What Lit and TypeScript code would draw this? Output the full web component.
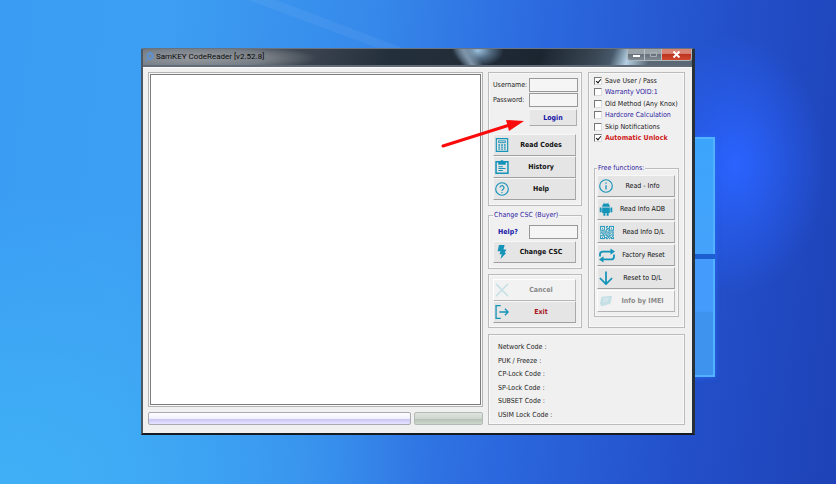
import { LitElement, html, svg, css } from "lit";
import { customElement, property } from "lit/decorators.js";

const qrRows = [
  "11111011011111",
  "10001010010001",
  "10101001110101",
  "10001011010001",
  "11111010111111",
  "00100110010010",
  "11011101101101",
  "01100110110011",
  "10111001011010",
  "00010110100101",
  "11111011011011",
  "10001001110010",
  "10101110101101",
  "11111011010111",
];

const icons: Record<string, unknown> = {
  calculator: svg`<path d="M1.500 .7h13v14.600h-13z" stroke-width="1.300"/><path d="M4 3.300h8v2H4z" stroke-width="1"/><path d="M3.800 8h2M7 8h2M10.200 8h2M3.800 10.400h2M7 10.400h2M10.200 10.400h2M3.800 12.800h2M7 12.800h2M10.200 12.800h2" stroke-width="1.500"/>`,
  clipboard: svg`<path d="M1.200 2h13.600v13.200H1.200z" stroke-width="1.700"/><path d="M4 5V2.400h2.300a1.700 2 0 0 1 3.400 0H12V5z" fill="currentColor" stroke-width=".6"/><path d="M4 7.700h5M4 9.800h8M4 12h5" stroke-width="1.200"/>`,
  help: svg`<circle cx="8" cy="8" r="7.200" stroke-width="1.300"/><path d="M5.700 6.400a2.300 2.300 0 1 1 3.500 2C8.400 8.900 8 9.200 8 10.200M8 11.400v1.200" stroke-width="1.300"/>`,
  bolt: svg`<path d="M4.500 0h6.500L9.700 5h3.300L11 9h1.800L6.400 16l1.200-5.400H5.200L6.300 7H3z" fill="currentColor" stroke="none"/>`,
  cross: svg`<path d="M1 .8l14 14.400M15 .8L1 15.200" stroke-width="1.800"/>`,
  exit: svg`<path d="M6.500 .8H1.200v14.400h5.300M5 8h10M11.300 4.200L15 8l-3.700 3.800" stroke-width="1.500"/>`,
  info: svg`<circle cx="8" cy="8" r="7.200" stroke-width="1.300"/><path d="M8 7v5M8 4v1.500" stroke-width="1.500"/>`,
  android: svg`<path d="M3.600 5.500a4.400 3.800 0 0 1 8.800 0zM3.600 6.200h8.800v6.300H3.600zM.8 6.300h2.200v5.500H.8zM13 6.300h2.200v5.500H13zM5 12h2.300v3.700H5zM8.700 12H11v3.700H8.700z" fill="currentColor" stroke="none"/><path d="M5.300 .8l1 2M10.700 .8l-1 2" stroke-width=".8"/>`,
  qr: svg`${qrRows.map((row, y) => [...row].map((c, x) => (c === "1" ? svg`<rect x=${x + 1} y=${y + 1} width="1" height="1" fill="currentColor" stroke="none"/>` : null)))}`,
  cycle: svg`<path d="M1 9V6.800a3 3 0 0 1 3-3h9M15 7v2.200a3 3 0 0 1-3 3H3" stroke-width="1.800"/><path d="M11.500 .5l4.500 3.300-4.500 3.300zM4.500 8.900L0 12.200l4.500 3.300z" fill="currentColor" stroke="none"/>`,
  down: svg`<path d="M8 .5v14.200M1 8l7 7 7-7" stroke-width="2"/>`,
  note: svg`<path d="M3 3l12-1-2 9-10 3-2-3z" fill="currentColor" stroke="none"/><path d="M5 6l6-1M5 8.500l5-1" stroke="#f3f4f4" stroke-width=".8"/>`,
  gear: svg`<circle cx="9" cy="6.500" r="4.500" stroke-width="3"/><path d="M9 0v3M9 10v3M2.500 6.500h3M12.500 6.500h3M4.500 11L1 15" stroke-width="2"/>`,
};

@customElement("tool-icon")
class ToolIcon extends LitElement {
  @property() name = "";
  static styles = css`
    :host { display: block; width: 16px; height: 16px; flex: none; }
    .glyph { display: block; width: 100%; height: 100%; fill: none; stroke: currentColor; }
  `;
  render() {
    return html`<svg class="glyph" viewBox="0 0 16 16" preserveAspectRatio="none" aria-hidden="true">${icons[this.name]}</svg>`;
  }
}

@customElement("tool-button")
class ToolButton extends LitElement {
  @property() icon = "";
  @property() label = "";
  @property() tone = "";
  @property({ type: Boolean }) disabled = false;
  static styles = css`
    :host { display: block; }
    .tool {
      display: flex; align-items: center; box-sizing: border-box; width: 100%; height: 22px;
      padding: 0 2px 0 1px; border: 1px solid; border-color: #f8f8f8 #a9a9a9 #a0a0a0 #f4f4f4;
      background: #e5e5e5; color: #111; font: bold 7px/10px "DejaVu Sans Condensed", sans-serif;
    }
    .caption { flex: 1; text-align: center; white-space: nowrap; }
    .pic { color: #1494b8; width: 14px; height: 14px; }
    .pic.cycle, .pic.qr { width: 16px; height: 15px; }
    .tool.plain { font-weight: normal; }
    .tool.danger { color: #a8161c; }
    .tool:disabled { background: #f2f2f2; color: #8a8a8a; border-color: #fff #bbb #b4b4b4 #fff; }
    .tool:disabled .pic { color: #c4e0e6; }
  `;
  render() {
    return html`<button class="tool ${this.tone}" ?disabled=${this.disabled}>
      <tool-icon class="pic ${this.icon}" name=${this.icon}></tool-icon><span class="caption">${this.label}</span>
    </button>`;
  }
}

const options = [
  { label: "Save User / Pass", checked: true, tone: "" },
  { label: "Warranty VOID:1", checked: false, tone: "blue" },
  { label: "Old Method (Any Knox)", checked: false, tone: "" },
  { label: "Hardcore Calculation", checked: false, tone: "blue" },
  { label: "Skip Notifications", checked: false, tone: "" },
  { label: "Automatic Unlock", checked: true, tone: "red" },
];

const freeTools = [
  { icon: "info", label: "Read - Info" },
  { icon: "android", label: "Read Info ADB" },
  { icon: "qr", label: "Read Info D/L" },
  { icon: "cycle", label: "Factory Reset" },
  { icon: "down", label: "Reset to D/L" },
];

const codes = ["Network Code :", "PUK / Freeze :", "CP-Lock Code :", "SP-Lock Code :", "SUBSET Code :", "USIM Lock Code :"];

@customElement("app-root")
class AppRoot extends LitElement {
  static styles = css`
    :host {
      display: flex; box-sizing: border-box; min-height: 100vh; position: relative; overflow: hidden;
      padding: 48px 141px 49px;
      font: 7px/10px "DejaVu Sans Condensed", sans-serif; color: #222;
      background:
        radial-gradient(ellipse 90px 130px at 88% 34%, #2a63ff 0%, #2a63ff88 45%, #2a63ff00 100%),
        linear-gradient(97deg, #3a9df3 0%, #3d9ff3 18%, #3689ea 42%, #2c6ae0 60%, #2350ca 82%, #1e42b7 100%);
    }
    .wallpaper { position: absolute; inset: 0; background: radial-gradient(ellipse 50% 60% at 0% 100%, #40b0f6 0%, #40b0f600 100%); }
    .beam { position: absolute; left: 248px; top: 0; width: 170px; height: 50px; }
    .logo { position: absolute; right: 121px; top: 137px; width: 40px; height: 240px; display: grid; grid-template-rows: 117px 118px; gap: 5px; background: #1d5fd0; box-shadow: 0 0 5px #2a6cf0; }
    .pane { background: linear-gradient(#3ba5fb, #45a2fb); border: solid #53b2ff; border-width: 2px 2px 0 0; }
    .pane.low { background: linear-gradient(#449bfb 45%, #3d93ee 46%); border-width: 0 2px 2px 0; }
    .window {
      position: relative; flex: 1; min-width: 0; display: flex; flex-direction: column;
      border: solid; border-width: 1px 3px 2px 2px; border-color: #68737f #283038 #151b20 #4c5863; background: #f0f0f0;
      border-radius: 2px 2px 0 0;
    }
    .titlebar {
      display: flex; align-items: center; height: 16px; gap: 2px; padding-left: 2px; border-bottom: 2px solid #626b78;
      background:
        radial-gradient(ellipse 120px 15px at 54px 9px, #a2a6abdd 0%, #8a8f95bb 60%, #8a8f9500 100%),
        linear-gradient(60deg, #fff0 57%, #8096aa 59%, #8096aa00 61%),
        radial-gradient(ellipse 26px 16px at 61% 10%, #9cc0de 0%, #6a8aa6aa 50%, #54708a00 100%),
        linear-gradient(110deg, #515a65 0%, #3b444f 30%, #242f3c 45%, #222c38 60%, #1b2530 72%, #3a4754 82%, #46586a 85%, #b5d0e4 88%, #5a6875 92%);
    }
    .title { flex: 1; margin: 0; font: normal 8px/12px Roboto, sans-serif; color: #0b0b0b; }
    .app-icon { width: 9px; height: 10px; color: #5b93d4; }
    .controls { display: flex; align-self: flex-start; height: 11px; border: 1px solid #aeb6be; border-top: 0; border-radius: 0 0 3px 3px; overflow: hidden; }
    .control { display: grid; place-items: center; width: 17px; height: 11px; padding: 0; border: 0; border-right: 1px solid #b8bfc6; background: linear-gradient(#9aa2aa 45%, #6a737c 50%, #7f8992); color: #fff; }
    .control.close { width: 29px; border: 0; background: linear-gradient(#d88474 40%, #bc3420 50%, #d0492e); }
    .control.max { color: #a8afb6; }
    .sign { display: block; width: 9px; height: 7px; fill: none; stroke: currentColor; stroke-width: 2; }
    .client {
      flex: 1; display: grid; grid-template-columns: minmax(0, 1fr) 94px 97px; grid-template-rows: 256px minmax(91px, 1fr);
      column-gap: 6px; row-gap: 6px; padding: 4px 7px 8px 5px; border-top: 1px solid #fbfbfb;
    }
    .output { grid-row: 1 / 3; display: flex; flex-direction: column; gap: 5px; margin-right: -1px; }
    .frame { flex: 1; display: flex; padding: 1px; border: 1px solid #b4b4b4; background: #f8f8f8; }
    .memo { flex: 1; box-sizing: border-box; width: 100%; margin: 0; resize: none; border: 1px solid #7c7c7c; outline: 0; background: #fff; }
    .bars { display: grid; grid-template-columns: minmax(0, 1fr) 69px; gap: 3px; }
    .bar { height: 11px; border: 1px solid #a9a9b2; border-radius: 2px; background: linear-gradient(#fff 0%, #f1f0ff 50%, #c9c4f4 55%, #e6e3ff 100%); }
    .bar.idle { border-color: #b4bab4; background: linear-gradient(#e0e4e0 0%, #cfd5cf 50%, #b5beb5 55%, #ced9cc 100%); }
    .side { display: flex; flex-direction: column; }
    .box { box-sizing: border-box; min-width: 0; margin: 0; padding: 0 5px 0 4px; border: 1px solid #bcbcbc; box-shadow: inset 0 0 0 1px #f8f8f8; }
    .account { height: 134px; padding-top: 4px; margin-bottom: 4px; }
    .field { display: grid; grid-template-columns: 36px minmax(0, 1fr); align-items: center; height: 15px; margin-right: -2px; white-space: nowrap; }
    .text { box-sizing: border-box; width: 100%; height: 14px; padding: 0 2px; border: 1px solid #999; background: #f5f5f5; font: inherit; }
    .login { display: block; width: 48px; height: 17px; margin: 2px -1px 8px auto; padding: 0; border: 1px solid; border-color: #f6f6f6 #b0b0b0 #aaa #eee; background: #e6e6e6; font: bold 7px/10px "DejaVu Sans Condensed", sans-serif; color: #1414a8; }
    .legend { padding: 0 1px; color: #2d20a0; }
    .csc { height: 59px; margin-bottom: 5px; }
    .csc .field { margin-bottom: 2px; margin-top: 4px; }
    .hint { padding-left: 5px; font-weight: bold; color: #1414a8; text-decoration: none; }
    .session { height: 54px; padding-top: 4px; }
    .settings { padding: 3px 5px 0; }
    .checks { display: grid; align-content: space-between; height: 67px; }
    .check { display: flex; align-items: center; gap: 3px; white-space: nowrap; }
    .tick { appearance: none; position: relative; flex: none; width: 8px; height: 8px; margin: 0; border: 1px solid; border-color: #777 #ddd #ddd #777; background: #fff; }
    .tick:checked::after { content: ""; position: absolute; left: 2px; top: 0; width: 2px; height: 4px; border: solid #111; border-width: 0 1px 1px 0; transform: rotate(40deg); }
    .blue { color: #2d20a0; }
    .red { color: #cf2020; font-weight: bold; }
    .free { height: 154px; margin: 20px 0 0; padding: 2px 3px 0 2px; }
    .stack { display: grid; gap: 1px; }
    .codes { grid-column: 2 / 4; display: flex; flex-direction: column; justify-content: space-between; padding: 7px 9px 4px; }
    .code { margin: 0; }
    .arrow { position: absolute; right: 165px; top: 69px; width: 86px; height: 32px; pointer-events: none; }
  `;

  render() {
    return html`
      <div class="wallpaper"></div>
      <svg class="beam" viewBox="0 0 170 50" aria-hidden="true"><path d="M0 0h28L160 50h-25z" fill="#fff" opacity=".05" /></svg>
      <div class="logo"><div class="pane"></div><div class="pane low"></div></div>
      <main class="window">
        <header class="titlebar">
          <tool-icon class="app-icon" name="gear"></tool-icon>
          <h1 class="title">SamKEY CodeReader [v2.52.8]</h1>
          <div class="controls">
            <button class="control" aria-label="Minimize"><svg class="sign" viewBox="0 0 9 7"><path d="M1 5h7" /></svg></button>
            <button class="control max" aria-label="Maximize"><svg class="sign" viewBox="0 0 9 7"><path d="M1.500 1.500h6v4h-6z" stroke-width="1" /></svg></button>
            <button class="control close" aria-label="Close"><svg class="sign" viewBox="0 0 9 7"><path d="M1.500 .5l6 6M7.500 .5l-6 6" /></svg></button>
          </div>
        </header>
        <div class="client">
          <section class="output">
            <div class="frame"><textarea class="memo" aria-label="Log" readonly></textarea></div>
            <div class="bars"><div class="bar"></div><div class="bar idle"></div></div>
          </section>
          <div class="side">
            <section class="box account">
              <div class="field"><label for="user">Username:</label><input class="text" id="user" /></div>
              <div class="field"><label for="pass">Password:</label><input class="text" id="pass" type="password" /></div>
              <button class="login">Login</button>
              <tool-button icon="calculator" label="Read Codes"></tool-button>
              <tool-button icon="clipboard" label="History"></tool-button>
              <tool-button icon="help" label="Help"></tool-button>
            </section>
            <fieldset class="box csc">
              <legend class="legend">Change CSC (Buyer)</legend>
              <div class="field"><a class="hint" href="#help">Help?</a><input class="text" aria-label="CSC" /></div>
              <tool-button icon="bolt" label="Change CSC"></tool-button>
            </fieldset>
            <section class="box session">
              <tool-button icon="cross" label="Cancel" disabled></tool-button>
              <tool-button icon="exit" label="Exit" tone="danger"></tool-button>
            </section>
          </div>
          <section class="box settings">
            <div class="checks">
              ${options.map((o) => html`<label class="check ${o.tone}"><input class="tick" type="checkbox" .checked=${o.checked} />${o.label}</label>`)}
            </div>
            <fieldset class="box free">
              <legend class="legend">Free functions:</legend>
              <div class="stack">
                ${freeTools.map((t) => html`<tool-button icon=${t.icon} label=${t.label} tone="plain"></tool-button>`)}
                <tool-button icon="note" label="Info by IMEI" disabled></tool-button>
              </div>
            </fieldset>
          </section>
          <section class="box codes">${codes.map((c) => html`<p class="code">${c}</p>`)}</section>
        </div>
        <svg class="arrow" viewBox="0 0 86 32" aria-hidden="true">
          <path d="M2 28L72 6" stroke="#fa0a0a" stroke-width="3" stroke-linecap="round" />
          <path d="M83 3L68 13l-1-4-2-7z" fill="#fa0a0a" />
        </svg>
      </main>
    `;
  }
}
